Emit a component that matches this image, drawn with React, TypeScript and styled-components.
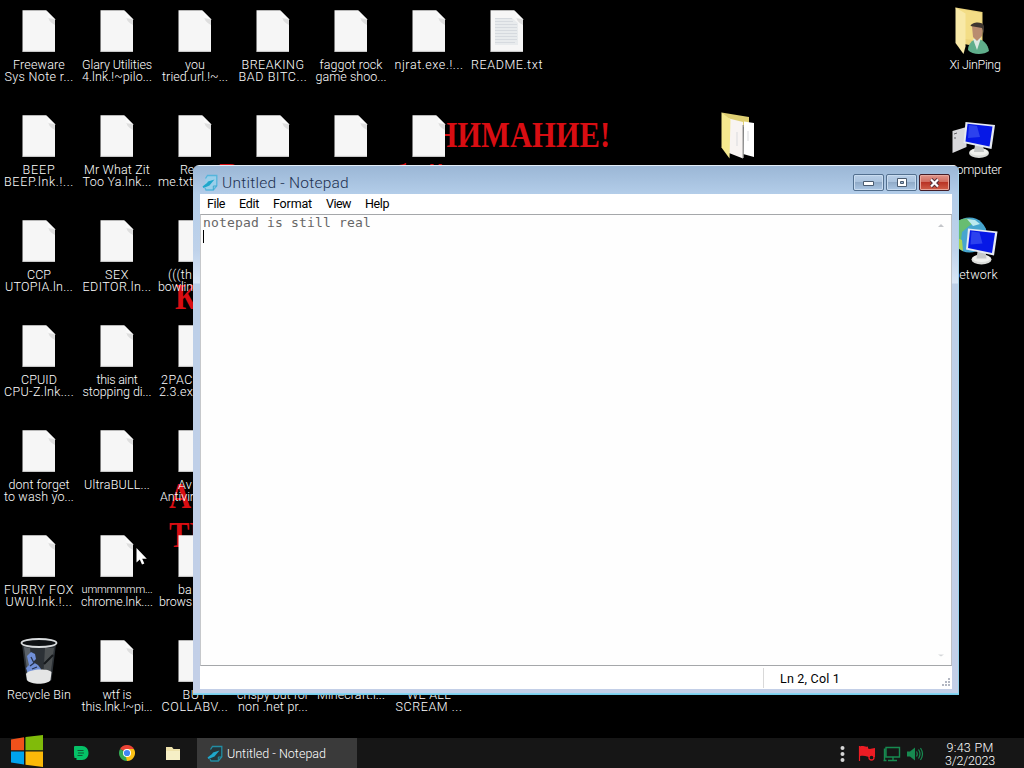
import { FC, useLayoutEffect, useRef } from 'react';
import styled, { createGlobalStyle, css } from 'styled-components';

const uiFont = css`
	font-family: Roboto, 'Liberation Sans', sans-serif;
	font-weight: 300;
`;

const GlobalStyle = createGlobalStyle`
	* { box-sizing: border-box; }
	body { margin: 0; background: #000; overflow: hidden; cursor: default; }
	svg { display: block; }
`;

const Screen = styled.div`
	position: relative;
	width: 1024px;
	height: 768px;
	overflow: hidden;
	background: #000;
	display: flex;
	flex-direction: column;
	${uiFont}
`;

const WallpaperText = styled.div<{ $x: number; $y: number }>`
	position: absolute;
	left: ${(p) => p.$x}px;
	top: ${(p) => p.$y}px;
	font: bold 36px/40px 'Liberation Serif', serif;
	color: #d80d12;
	white-space: nowrap;
	transform: scaleX(0.85);
	transform-origin: 0 0;
`;

/* ---------- text ---------- */

const Line = styled.span<{ $left?: number; $small?: boolean }>`
	display: block;
	white-space: pre;
	${(p) => p.$small && css`
		font-size: 11px;
	`}
	${(p) => p.$left !== undefined && css`
		align-self: flex-start;
		margin-left: ${p.$left}px;
	`}
`;

type FitProps = { text: string; width: number; left?: number };

/**
 * Spaces its letters so that the line takes the given width.
 */
const FitText: FC<FitProps> = ({ text, width, left }) => {
	const ref = useRef<HTMLSpanElement>(null);
	useLayoutEffect(() => {
		const el = ref.current;
		if (!el) return;
		const range = document.createRange();
		range.selectNodeContents(el);
		el.style.letterSpacing = '0px';
		const natural = range.getBoundingClientRect().width;
		el.style.letterSpacing = `${(width - natural) / text.length}px`;
	}, [text, width]);
	return <Line ref={ref} $left={left} $small={text.includes('mmm')}>{text}</Line>;
};

/* ---------- desktop ---------- */

const DesktopGrid = styled.div`
	position: relative;
	flex: 1;
	display: grid;
	grid-template-columns: repeat(13, 78px);
	grid-template-rows: repeat(7, 105px);
	height: 738px;
`;

const DesktopItem = styled.div<{ $col: number; $row: number }>`
	grid-column: ${(p) => p.$col};
	grid-row: ${(p) => p.$row};
	display: flex;
	flex-direction: column;
	align-items: center;
	width: 78px;
`;

const IconBox = styled.div`
	height: 59px;
	width: 78px;
`;

const Label = styled.div`
	display: flex;
	flex-direction: column;
	align-items: center;
	width: 78px;
	font-size: 12.5px;
	line-height: 12px;
	color: #fff;
`;

type IconKind = 'file' | 'text' | 'bin' | 'user' | 'folder' | 'computer' | 'network';

const Monitor: FC = () => (
	<g>
		<ellipse cx="42" cy="48" rx="10" ry="5" fill="#d9dbd8" />
		<ellipse cx="42" cy="47" rx="9" ry="3.5" fill="#f0f1ee" />
		<path d="M38 40h8l1 7h-10z" fill="#c6c9c8" />
		<path d="M28.500 17L58 20l-3.500 24L26.500 38z" fill="#e6eaf3" />
		<path d="M30.500 18.800L55.500 21.500l-3 20L28.500 36.500z" fill="#0618e6" />
		<path d="M32 20l8 1 3 11-12 1z" fill="#4058f2" opacity=".65" />
	</g>
);

const DesktopIcon: FC<{ kind: IconKind }> = ({ kind }) => (
	<svg width="78" height="58" viewBox="0 0 78 58">
		{(kind === 'file' || kind === 'text') && (
			<>
				<path d="M22.500 10.200H46l9 9v32.500H22.500z" fill="#f6f6f6" />
				<path d="M46 10.200c2 3 1.500 7 3.500 10.500 2 2.500 4 3 5.500 4.500v-6z" fill="#dedede" />
				<path d="M46 10.200l9 9c-3-.8-6-.7-7-1.800-1-1.500 0-4-2-7.200z" fill="#fafafa" />
				<path d="M22.500 51.300H55" stroke="#cfcfcf" strokeWidth=".8" />
			</>
		)}
		{kind === 'text' && (
			<>
				<path d="M27 18h17l6 5v22H27z" fill="#e8ebed" />
				<path d="M27 18.500h17M27 21.500h18M27 24.500h22M27 27.500h22M27 30.500h22M27 33.500h22M27 36.500h22M27 39.500h22M27 42.500h20" stroke="#d0d5da" strokeWidth=".8" />
			</>
		)}
		{kind === 'bin' && (
			<>
				<path d="M22 14l4.500 36c4 4 21 4 25 0L56 14z" fill="#2c3136" />
				<path d="M24 17l4 30 5 1-3-30z" fill="#596067" />
				<path d="M45 18h9l-4 30-7 2z" fill="#4c5052" />
				<path d="M27 26l4-4 4 2 1 5-3 3 5 3 3 4-2 5-6-2-5 2-2-6 3-3z" fill="#7190d8" />
				<path d="M31 27l3 6-4 3M37 37l-5 2" stroke="#26334e" strokeWidth="1.300" fill="none" />
				<path d="M44 34l9-9" stroke="#15181b" strokeWidth="2" />
				<path d="M26 44c2-5 22-6 25.500-2L50.500 50c-3 5-20 5-23.500 0z" fill="#e4e5e5" />
				<ellipse cx="39" cy="13" rx="17.500" ry="4" fill="#0d1013" stroke="#d9dcde" strokeWidth="1.800" />
			</>
		)}
		{kind === 'user' && (
			<>
				<path d="M19.500 7.500L46.500 12v36l-18-4z" fill="#ead27a" />
				<path d="M24 9l21.500 4v28L29 39z" fill="#f3dd86" />
				<path d="M19.500 7.500l10 6v33l-2 7.500-8-11z" fill="#f8e9a8" />
				<path d="M32 50c0-6 4-10 9-11 6 0 11 5 12 12-5 4-17 4-21-1z" fill="#5fae8b" />
				<path d="M37 39l8-1-4 12z" fill="#dce9e2" />
				<path d="M36 26c2-4 10-4 11 0l-1 10-5 5-4-4z" fill="#b98c70" />
				<path d="M34.500 26c1-4 12-5 13.500 0v8l-2-6z" fill="#3e3630" />
			</>
		)}
		{kind === 'folder' && (
			<>
				<path d="M19.500 7.500L47 12v10H28z" fill="#dfcf73" />
				<path d="M25 13l16 4v36.500L27 48z" fill="#f8f4f2" />
				<path d="M42 16.500l10 1.500v34l-11-3z" fill="#fff" />
				<path d="M41.200 20V53" stroke="#8d8d8d" strokeWidth="1.300" />
				<path d="M35 27v14M46 26v10" stroke="#d9dadd" strokeWidth="1" />
				<path d="M19.500 7.500l9 7-1 39-8-11z" fill="#f5e98f" />
			</>
		)}
		{kind === 'computer' && (
			<>
				<path d="M16.500 26l14-4v20l-14 6z" fill="#d7d7db" />
				<path d="M18 29l3-1M18 33h2" stroke="#606064" strokeWidth="1" />
				<g transform="translate(1 0)"><Monitor /></g>
			</>
		)}
		{kind === 'network' && (
			<>
				<circle cx="33.500" cy="25" r="17.500" fill="#46a5cf" />
				<path d="M21 12c6-5 14-4 18 0l-6 4-7 6-1 8-5 4c-6-8-5-16 1-22z" fill="#68bd71" />
				<path d="M19 27l7 3 1 11c-5-2-9-7-8-14z" fill="#a9d354" />
				<path d="M31 9l8 1 5 4-7 2z" fill="#bce9ef" />
				<g transform="translate(3.500 1.500)"><Monitor /></g>
			</>
		)}
	</svg>
);

type Item = {
	col: number;
	row: number;
	kind: IconKind;
	lines: [text: string, width: number, left?: number][];
};

const items: Item[] = [
	{ col: 1, row: 1, kind: 'file', lines: [['Freeware', 52], ['Sys Note r...', 69]] },
	{ col: 2, row: 1, kind: 'file', lines: [['Glary Utilities', 70], ['4.lnk.!~pilo...', 70]] },
	{ col: 3, row: 1, kind: 'file', lines: [['you', 20], ['tried.url.!~...', 66]] },
	{ col: 4, row: 1, kind: 'file', lines: [['BREAKING', 63], ['BAD BITC...', 69]] },
	{ col: 5, row: 1, kind: 'file', lines: [['faggot rock', 63], ['game shoo...', 71]] },
	{ col: 6, row: 1, kind: 'file', lines: [['njrat.exe.!...', 69]] },
	{ col: 7, row: 1, kind: 'text', lines: [['README.txt', 72]] },
	{ col: 1, row: 2, kind: 'file', lines: [['BEEP', 33], ['BEEP.lnk.!...', 70]] },
	{ col: 2, row: 2, kind: 'file', lines: [['Mr What Zit', 66], ['Too Ya.lnk...', 69]] },
	{ col: 3, row: 2, kind: 'file', lines: [['Re', 14, 24], ['me.txt', 35, 2]] },
	{ col: 4, row: 2, kind: 'file', lines: [] },
	{ col: 5, row: 2, kind: 'file', lines: [] },
	{ col: 6, row: 2, kind: 'file', lines: [] },
	{ col: 1, row: 3, kind: 'file', lines: [['CCP', 24], ['UTOPIA.ln...', 68]] },
	{ col: 2, row: 3, kind: 'file', lines: [['SEX', 24], ['EDITOR.ln...', 69]] },
	{ col: 3, row: 3, kind: 'file', lines: [['(((th', 24, 12], ['bowlin', 35, 2]] },
	{ col: 1, row: 4, kind: 'file', lines: [['CPUID', 36], ['CPU-Z.lnk....', 70]] },
	{ col: 2, row: 4, kind: 'file', lines: [['this aint', 41], ['stopping di...', 69]] },
	{ col: 3, row: 4, kind: 'file', lines: [['2PAC', 32, 5], ['2.3.ex', 34, 3]] },
	{ col: 1, row: 5, kind: 'file', lines: [['dont forget', 61], ['to wash yo...', 70]] },
	{ col: 2, row: 5, kind: 'file', lines: [['UltraBULL...', 66]] },
	{ col: 3, row: 5, kind: 'file', lines: [['Av', 14, 22], ['Antivir', 34, 4]] },
	{ col: 1, row: 6, kind: 'file', lines: [['FURRY FOX', 70], ['UWU.lnk.!...', 67]] },
	{ col: 2, row: 6, kind: 'file', lines: [['ummmmmm...', 71], ['chrome.lnk....', 72]] },
	{ col: 3, row: 6, kind: 'file', lines: [['ba', 14, 22], ['brows', 33, 3]] },
	{ col: 1, row: 7, kind: 'bin', lines: [['Recycle Bin', 64]] },
	{ col: 2, row: 7, kind: 'file', lines: [['wtf is', 29], ['this.lnk.!~pi...', 71]] },
	{ col: 3, row: 7, kind: 'file', lines: [['BUT', 25], ['COLLABV...', 67]] },
	{ col: 4, row: 7, kind: 'file', lines: [['crispy but for', 72], ['non .net pr...', 70]] },
	{ col: 5, row: 7, kind: 'file', lines: [['Minecraft.l...', 68]] },
	{ col: 6, row: 7, kind: 'file', lines: [['WE ALL', 44], ['SCREAM ...', 67]] },
	{ col: 10, row: 2, kind: 'folder', lines: [] },
	{ col: 13, row: 1, kind: 'user', lines: [['Xi JinPing', 51]] },
	{ col: 13, row: 2, kind: 'computer', lines: [['Computer', 53]] },
	{ col: 13, row: 3, kind: 'network', lines: [['Network', 48, 14]] },
];

/* ---------- notepad window ---------- */

const Window = styled.section`
	position: absolute;
	left: 193px;
	top: 165px;
	width: 766px;
	height: 530px;
	display: flex;
	flex-direction: column;
	padding: 0 7px 6px;
	border-radius: 6px 6px 0 0;
	background:
		linear-gradient(#8fd9f5, #6fc9e8) bottom / 100% 2px no-repeat,
		linear-gradient(#a9d6ee, #8fcfe9) right / 1px 100% no-repeat,
		linear-gradient(#e3edf7, #e3edf7) top / 100% 1px no-repeat,
		linear-gradient(#9ab6d5 0, #b3cde9 29px, #bfd2ea 85px, #d9e6f6 118px, #bccfe8 119px, #c3cfe7 100%);
`;

const TitleBar = styled.header`
	display: flex;
	align-items: center;
	height: 29px;
	flex: none;
	padding: 6px 2px 0 2px;
	gap: 4px;
	font-size: 15.5px;
	color: #1c3050;
`;

const WindowButtons = styled.div`
	display: flex;
	gap: 2px;
	margin-left: auto;
`;

const WindowButton = styled.button<{ $close?: boolean }>`
	width: 31px;
	height: 17px;
	padding: 0;
	display: grid;
	place-items: center;
	border: 1px solid ${(p) => (p.$close ? '#431c26' : '#53708f')};
	border-radius: 2px;
	box-shadow: inset 0 0 0 1px ${(p) => (p.$close ? '#e7a79b' : '#c9dcf0')};
	background: ${(p) => p.$close
		? 'linear-gradient(#e0958a 0, #cf6a5c 48%, #b93425 50%, #d0604a 100%)'
		: 'linear-gradient(#b9cfe8 0, #a9c2dd 48%, #91abc8 50%, #aac6e4 100%)'};
`;

const MenuBar = styled.nav`
	display: flex;
	flex: none;
	height: 20px;
	padding-left: 7px;
	gap: 14px;
	font-size: 12.5px;
	font-weight: 400;
	line-height: 19px;
	color: #000;
	background: #fff;
`;

const TextArea = styled.main`
	flex: 1;
	display: flex;
	justify-content: space-between;
	padding: 1px 7px 8px 2px;
	background: #fefefe;
	border: 1px solid #a5a7aa;
	border-right-color: #bcc0c5;
	border-left-color: #c6c8cb;
`;

const Typed = styled.div`
	font-family: 'DejaVu Sans Mono', 'Liberation Mono', monospace;
	font-size: 13px;
	line-height: 14px;
	color: #666;
`;

const Caret = styled.div`
	width: 1px;
	height: 13px;
	background: #000;
`;

const ScrollArrows = styled.div`
	display: flex;
	flex-direction: column;
	justify-content: space-between;
	padding-top: 8px;
`;

const StatusBar = styled.footer`
	display: flex;
	flex: none;
	height: 23px;
	background: #fff;
	justify-content: flex-end;
	align-items: stretch;
`;

const StatusCell = styled.div`
	width: 179px;
	margin: 2px 0 1px;
	padding-left: 16px;
	border-left: 1px solid #d9d9d9;
	font-size: 12.5px;
	font-weight: 400;
	line-height: 21px;
`;

const Grip = styled.div`
	align-self: flex-end;
	padding: 0 1px 2px 0;
`;

const NoteIcon: FC<{ dark?: boolean }> = ({ dark }) => (
	<svg width="16" height="17" viewBox="0 0 16 17" fill="none">
		<path d="M3.500 4.500l2-3h9.300v10.200l-3.500 4.300H4l-1-2" stroke={dark ? '#238da3' : '#55b5dc'} strokeWidth="1.300" fill={dark ? '#25363b' : '#9bcfea'} />
		<path d="M11.300 16v-4h3.500" stroke={dark ? '#238da3' : '#3ca9cf'} />
		<path d="M.5 12.500L5 9l1-1.500 6.500-2L9.500 9l-2 2.500-6 2.500z" fill="#1fa7cb" />
	</svg>
);

const Notepad: FC = () => (
	<Window>
		<TitleBar>
			<NoteIcon />
			<FitText text="Untitled - Notepad" width={127} />
			<WindowButtons>
				<WindowButton>
					<svg width="13" height="7" viewBox="0 0 13 7"><path d="M1.500 2.500h10v4h-10z" fill="#fff" stroke="#4a5b70" /></svg>
				</WindowButton>
				<WindowButton>
					<svg width="12" height="10" viewBox="0 0 12 10"><path d="M1.500 .5h9v8h-9z" fill="#fff" stroke="#4a5b70" /><path d="M4.500 3.500h3v2h-3z" fill="#9ab2ce" stroke="#4a5b70" /></svg>
				</WindowButton>
				<WindowButton $close>
					<svg width="13" height="10" viewBox="0 0 13 10"><path d="M3 1.500l7 7M10 1.500l-7 7" stroke="#54303a" strokeWidth="4" /><path d="M3 1.500l7 7M10 1.500l-7 7" stroke="#fff" strokeWidth="2.200" /></svg>
				</WindowButton>
			</WindowButtons>
		</TitleBar>
		<MenuBar>
			<FitText text="File" width={18} />
			<FitText text="Edit" width={20} />
			<FitText text="Format" width={39} />
			<FitText text="View" width={25} />
			<FitText text="Help" width={24} />
		</MenuBar>
		<TextArea>
			<Typed>
				<FitText text="notepad is still real" width={168} />
				<Caret />
			</Typed>
			<ScrollArrows>
				<svg width="6" height="3"><path d="M0 3l3-3 3 3z" fill="#c4c6ca" /></svg>
				<svg width="6" height="3"><path d="M0 .5h6L3 2.500z" fill="#d5d7da" /></svg>
			</ScrollArrows>
		</TextArea>
		<StatusBar>
			<StatusCell><FitText text="Ln 2, Col 1" width={60} /></StatusCell>
			<Grip>
				<svg width="9" height="9" viewBox="0 0 9 9" fill="#b3b7c2">
					<path d="M6 0h2v2H6zM3 3h2v2H3zM6 3h2v2H6zM0 6h2v2H0zM3 6h2v2H3zM6 6h2v2H6z" />
				</svg>
			</Grip>
		</StatusBar>
	</Window>
);

/* ---------- taskbar ---------- */

const Taskbar = styled.div`
	position: relative;
	flex: none;
	height: 30px;
	display: flex;
	align-items: center;
	background: #161616;
	color: #fff;
`;

const StartButton = styled.div`
	width: 55px;
	height: 33px;
	margin-top: -3px;
	padding-left: 11px;
`;

const Launcher = styled.div`
	width: 46px;
	display: grid;
	place-items: center;
	padding-left: 6px;
`;

const TaskButton = styled.div`
	display: flex;
	align-items: center;
	width: 160px;
	height: 30px;
	margin-left: 4px;
	padding-left: 10px;
	gap: 4px;
	font-size: 12.5px;
	background: #3a3a3a;
`;

const Tray = styled.div`
	display: flex;
	align-items: center;
	margin-left: auto;
	padding-top: 2px;
`;

const Clock = styled.div`
	display: flex;
	flex-direction: column;
	align-items: center;
	width: 54px;
	margin: 0 27px 0 19px;
	font-size: 12.5px;
	line-height: 13px;
`;

const Pointer = styled.svg`
	position: absolute;
	left: 136px;
	top: 548px;
`;

export default function App() {
	return (
		<Screen>
			<GlobalStyle />
			<WallpaperText $x={413} $y={115}>ВНИМАНИЕ!</WallpaperText>
			<WallpaperText $x={219} $y={156}>В</WallpaperText>
			<WallpaperText $x={392} $y={157}>б</WallpaperText>
			<WallpaperText $x={427} $y={157}>й</WallpaperText>
			<WallpaperText $x={175} $y={277}>К</WallpaperText>
			<WallpaperText $x={169} $y={476}>А</WallpaperText>
			<WallpaperText $x={169} $y={515}>ТЕ</WallpaperText>
			<DesktopGrid>
				{items.map((item) => (
					<DesktopItem key={`${item.col}-${item.row}`} $col={item.col} $row={item.row}>
						<IconBox><DesktopIcon kind={item.kind} /></IconBox>
						<Label>
							{item.lines.map(([text, width, left]) => (
								<FitText key={text} text={text} width={width} left={left} />
							))}
						</Label>
					</DesktopItem>
				))}
			</DesktopGrid>
			<Notepad />
			<Taskbar>
				<StartButton>
					<svg width="33" height="33" viewBox="0 0 33 33">
						<path d="M0 4.500L13 2.300v13H0z" fill="#f1511b" />
						<path d="M14.500 2L32 0v15.300H14.500z" fill="#80bb0a" />
						<path d="M0 16.500h13v13L0 27.500z" fill="#00a3ee" />
						<path d="M14.500 16.500H32V32l-17.500-2.300z" fill="#fbb908" />
					</svg>
				</StartButton>
				<Launcher>
					<svg width="16" height="14" viewBox="0 0 16 14">
						<path d="M1.500 0H9c4 0 6.500 3 6.500 7S13 14 9 14H3.500V12H1.500L1 9V1z" fill="#05c167" />
						<path d="M4.500 4.500h6M5 7h6M4.500 9.500h5" stroke="#0a5c35" strokeWidth="1.100" />
					</svg>
				</Launcher>
				<Launcher>
					<svg width="16" height="16" viewBox="0 0 16 16">
						<path d="M8 8L1.070 4A8 8 0 0 1 14.930 4z" fill="#ea4335" />
						<path d="M8 8L14.930 4A8 8 0 0 1 8 16z" fill="#fbc116" />
						<path d="M8 8V16A8 8 0 0 1 1.070 4z" fill="#34a853" />
						<path d="M8 4h7L11.500 10 8 16l-1-4z" fill="#fbc116" />
						<circle cx="8" cy="8" r="4" fill="#fff" />
						<circle cx="8" cy="8" r="3.100" fill="#4285f4" />
					</svg>
				</Launcher>
				<Launcher>
					<svg width="14" height="13" viewBox="0 0 14 13">
						<path d="M0 0h6l1.500 2H14v11H0z" fill="#efe3ad" />
						<path d="M0 4h14v9H0z" fill="#f6efc6" />
					</svg>
				</Launcher>
				<TaskButton>
					<NoteIcon dark />
					<FitText text="Untitled - Notepad" width={99} />
				</TaskButton>
				<Tray>
					<svg width="108" height="20" viewBox="0 0 108 20">
						<g fill="#d6d6d6">
							<circle cx="26.500" cy="4" r="2" />
							<circle cx="26.500" cy="10" r="2" />
							<circle cx="26.500" cy="16" r="2" />
						</g>
						<path d="M43.500 2v15" stroke="#ed1c24" strokeWidth="1.200" />
						<path d="M44 2.500c3-1.500 5 1 8 0v2c2 1 4 0 7-.5v9h-3c-4 1-5-2-12-1z" fill="#ed1c24" />
						<circle cx="55.500" cy="13.500" r="2.500" fill="#161616" stroke="#ed1c24" strokeWidth="1.300" />
						<path d="M70 3.500h13.500v9.500H70zM77 13v3M72 16.500h9M68.500 4.500v12M67.500 16.500h3" fill="none" stroke="#178a50" strokeWidth="1.400" />
						<path d="M91 7.500h3l5-4v13l-5-4h-3z" fill="#178a50" />
						<path d="M100.500 7.500q1.500 2.500 0 5M102.500 5.500q3 4.500 0 9M104.500 4q4 6 0 12" fill="none" stroke="#178a50" strokeWidth="1.200" />
					</svg>
					<Clock>
						<FitText text="9:43 PM" width={47} />
						<FitText text="3/2/2023" width={50} />
					</Clock>
				</Tray>
			</Taskbar>
			<Pointer width="12" height="18" viewBox="0 0 12 18">
				<path d="M.5 0v14.500l3.300-3L6 16.500l2.300-1L6.200 10.700h4.600z" fill="#fff" />
			</Pointer>
		</Screen>
	);
}
